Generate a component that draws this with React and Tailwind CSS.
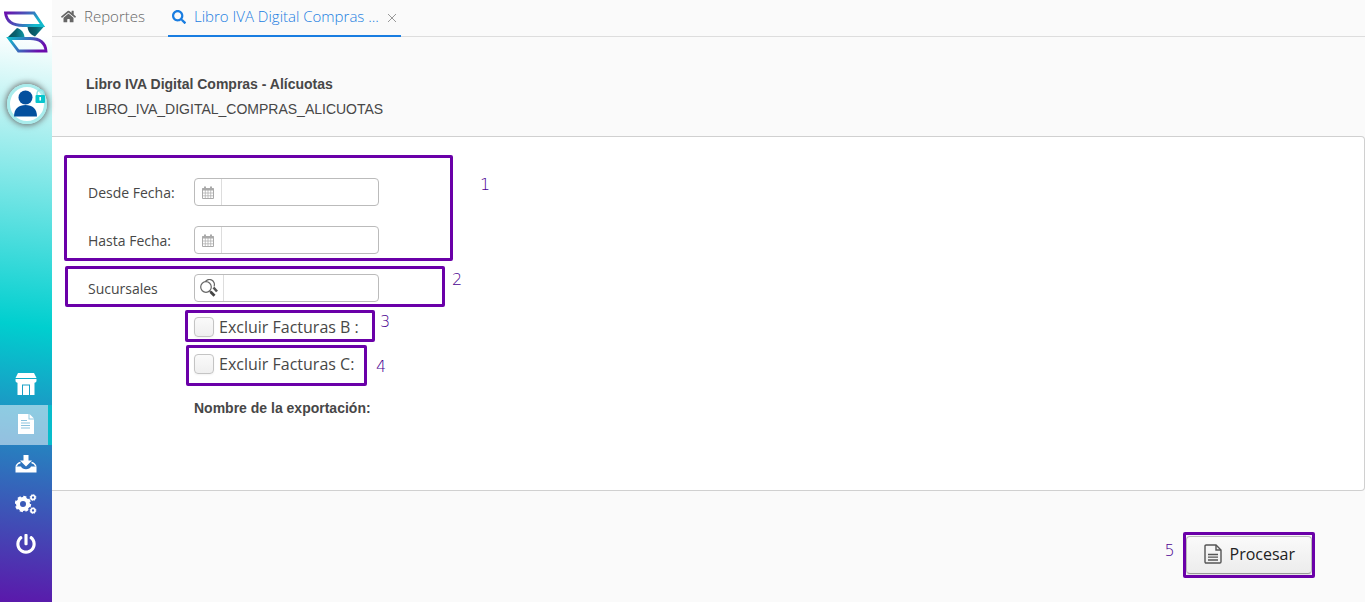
import React from "react";
import { FaHome, FaSearch, FaPowerOff } from "react-icons/fa";

function Logo() {
  return (
    <svg viewBox="0 0 44 42" className="w-11 h-[42px]" fill="none">
      <defs>
        <linearGradient id="logoTop" x1="0" y1="0" x2="1" y2="0.3">
          <stop offset="0" stopColor="#6a0dad" />
          <stop offset="0.5" stopColor="#4a55b8" />
          <stop offset="1" stopColor="#12b9cc" />
        </linearGradient>
        <linearGradient id="logoBottom" x1="0" y1="0" x2="1" y2="0.3">
          <stop offset="0" stopColor="#12b9cc" />
          <stop offset="0.5" stopColor="#3a6cbc" />
          <stop offset="1" stopColor="#6a0dad" />
        </linearGradient>
        <linearGradient id="logoFold" x1="0" y1="0" x2="1" y2="0">
          <stop offset="0" stopColor="#0b4d5c" />
          <stop offset="0.5" stopColor="#08616f" />
          <stop offset="1" stopColor="#0f97a5" />
        </linearGradient>
      </defs>
      <path d="M23.500 15H40.500L31 25.500c-4-1.500-7.500-5-7.500-10.500z" fill="url(#logoFold)" />
      <path d="M20.500 27H3L13 17c4 1 7.500 4.500 7.500 10z" fill="url(#logoFold)" />
      <path
        d="M1.500 2h28.500l8.500 12.500H19C8 14.500 2.500 10 1.500 2z"
        stroke="url(#logoTop)"
        strokeWidth="2.800"
      />
      <path
        d="M42 40H14.500L5 27.500h21C36 27.500 41.300 32 42 40z"
        stroke="url(#logoBottom)"
        strokeWidth="2.800"
      />
    </svg>
  );
}

function Avatar() {
  return (
    <svg viewBox="0 0 40 40" className="size-10" fill="none">
      <circle cx="20" cy="20" r="18.500" fill="#fff" stroke="#a9ecec" strokeWidth="3" />
      <circle cx="18.500" cy="13.500" r="7" fill="#04509e" />
      <path d="M7 32.500c0-8 5-11.500 11.500-11.500S30 24.500 30 32.500z" fill="#04509e" />
      <path d="M30 12v-2.500a3.500 3.500 0 0 1 7 0V12" stroke="#8fe3e6" strokeWidth="1.500" />
      <rect x="28.500" y="11" width="9.500" height="8" rx="1" fill="#08c5cd" />
      <path d="M33.200 13v3.500" stroke="#fff" strokeWidth="1.600" />
    </svg>
  );
}

function StoreIcon() {
  return (
    <svg viewBox="0 0 22 24" className="w-[22px] h-6">
      <path d="M3 1h16l2.500 5h-21z" fill="#fff" />
      <path
        d="M.5 7h21v1.500a2 2 0 0 1-4 .5 2.200 2.200 0 0 1-4.300 0 2.200 2.200 0 0 1-4.400 0 2.200 2.200 0 0 1-4.300 0 2 2 0 0 1-4-.5z"
        fill="#fff"
      />
      <path d="M2.500 9h17v14h-17z" fill="#fff" />
      <path d="M7.500 13v10M14.500 13v10M7 13h8" stroke="#19a0c6" strokeWidth="1" fill="none" />
    </svg>
  );
}

function FileIcon() {
  return (
    <svg viewBox="0 0 16 20" className="w-4 h-5">
      <path d="M0 0h10.500v5.500H16V20H0z" fill="#fff" />
      <path d="M11.500 0 16 4.500h-4.500z" fill="#fff" />
      <path d="M3 6.500h6M3 9h9M3 11.500h9M3 14h9" stroke="#8cc3de" strokeWidth="1.200" />
    </svg>
  );
}

function InboxIcon() {
  return (
    <svg viewBox="0 0 22 18" className="w-[22px] h-[18px]" fill="#fff">
      <path d="M8.500 0h5v5.500H17l-6 6-6-6h3.500z" />
      <path d="M.5 11.500h5.500c.8 2 2.500 2.700 5 2.700s4.200-.7 5-2.700h5.500v6H.5z" />
      <path d="M1 11.500Q2.500 8 5.500 7.500M21 11.500q-1.500-3.500-4.500-4" fill="none" stroke="#fff" strokeWidth="1.300" />
    </svg>
  );
}

function GearsIcon() {
  return (
    <svg viewBox="0 0 22 20" className="w-[22px] h-5" fill="none" stroke="#fff">
      <circle cx="8" cy="10" r="5" strokeWidth="4" />
      <circle cx="8" cy="10" r="7.200" strokeWidth="2" strokeDasharray="3.200 2.455" />
      <circle cx="18" cy="3.500" r="2" strokeWidth="1.700" />
      <circle cx="18" cy="3.500" r="2.900" strokeWidth="1" strokeDasharray="1.300 0.978" />
      <circle cx="18" cy="16.500" r="2" strokeWidth="1.700" />
      <circle cx="18" cy="16.500" r="2.900" strokeWidth="1" strokeDasharray="1.300 0.978" />
    </svg>
  );
}

function CalendarIcon() {
  return (
    <svg viewBox="0 0 12 13" className="w-3 h-[13px]" fill="none" stroke="#aaa">
      <path d="M.5 2.500h11v10H.500z" />
      <path d="M0 3.500h12" strokeWidth="2" />
      <path d="M3 .5v3M9 .5v3" strokeWidth="2" />
      <path d="M.5 7h11M.5 9.800h11M3.300 4v8.500M6 4v8.500M8.700 4v8.500" strokeWidth="0.700" />
    </svg>
  );
}

function LookupIcon() {
  return (
    <svg viewBox="0 0 18 18" className="size-[18px]" fill="none" stroke="#666">
      <path d="M4.800 3.500A5 5 0 1 1 14 7.500" strokeWidth="1.200" />
      <path d="m13.500 8.500 3.500 4" stroke="#555" strokeWidth="2.600" />
      <circle cx="6" cy="8" r="5.300" fill="#fff" strokeWidth="1.200" />
      <path d="m9.500 11.700 1.500 1.500" strokeWidth="1.300" />
      <path d="m10.500 12.700 4 4" stroke="#444" strokeWidth="2.800" />
    </svg>
  );
}

function DocumentIcon() {
  return (
    <svg viewBox="0 0 18 20" className="w-[18px] h-5" fill="none" stroke="#555">
      <path d="M1 2.200Q1 1 2.200 1H12l5 5v11.800q0 1.200-1.200 1.200H2.200Q1 19 1 17.800z" strokeWidth="1.400" />
      <path d="M12 1v5h5" strokeWidth="1.400" />
      <path d="M4 10.500h10M4 13.200h10M4 16h10" strokeWidth="1.300" />
    </svg>
  );
}

const menu = [
  { name: "Ventas", icon: <StoreIcon /> },
  { name: "Reportes", icon: <FileIcon />, active: true },
  { name: "Descargas", icon: <InboxIcon /> },
  { name: "Configuración", icon: <GearsIcon /> },
  { name: "Salir", icon: <FaPowerOff className="size-5 text-white" /> },
];

// Numbered call-out frame drawn over the form
function Mark({ number, box, label }) {
  return (
    <div
      className={`absolute pointer-events-none border-3 border-[#6a00a8] rounded-xs ${box}`}
    >
      <span
        className={`absolute font-['DejaVu_Sans',sans-serif] font-extralight text-base leading-4 text-[#4a0090] ${label}`}
      >
        {number}
      </span>
    </div>
  );
}

function Field({ id, label, icon, iconWidth }) {
  return (
    <div className="flex items-start h-7">
      <label htmlFor={id} className="w-[106px] pt-px text-sm leading-7">
        {label}
      </label>
      <div className="flex w-[185px] h-7 border border-[#bbb] rounded bg-white">
        <button
          type="button"
          aria-label={label}
          className={`flex items-center justify-center border-r border-[#ddd] ${iconWidth}`}
        >
          {icon}
        </button>
        <input id={id} type="text" className="flex-1 min-w-0 px-2 text-sm outline-none" />
      </div>
    </div>
  );
}

function Check({ id, label }) {
  return (
    <div className="flex items-center h-5 gap-[5px]">
      <input
        id={id}
        type="checkbox"
        className="appearance-none size-5 border border-[#c4c4c4] rounded bg-linear-to-b from-[#fafafa] to-[#efefef] shadow-xs"
      />
      <label htmlFor={id} className="text-base">
        {label}
      </label>
    </div>
  );
}

export default function App() {
  return (
    <div className="flex min-h-screen bg-[#fafafa] font-['Open_Sans',sans-serif] text-[#474747]">
      <aside className="flex flex-col w-13 shrink-0 bg-[linear-gradient(187deg,#fff_6%,#00cfcf_54%,#5b18ab_100%)]">
        <div className="pl-1 pt-[11px]">
          <Logo />
        </div>
        <button
          type="button"
          aria-label="Usuario"
          className="mt-[31px] ml-[7px] size-10 rounded-full shadow-[0_0_6px_1px_#666]"
        >
          <Avatar />
        </button>
        <nav className="mt-auto pb-[37px]">
          {menu.map((item) => (
            <a
              key={item.name}
              href="#"
              aria-label={item.name}
              className={`flex items-center justify-center h-10 pb-[2px] ${
                item.active ? "bg-white/50 bg-clip-padding border-r-4 border-[#08bccb] pl-1" : ""
              }`}
            >
              {item.icon}
            </a>
          ))}
        </nav>
      </aside>

      <main className="flex-1 min-w-0">
        <nav className="flex h-[37px] border-b border-[#ddd] text-[15px] font-light">
          <a href="#" className="flex items-center gap-2 pl-[9px] pb-[3px] text-[#666]">
            <FaHome className="size-[15px]" />
            Reportes
          </a>
          <div className="flex items-center ml-[23px] pl-1 pr-1 -mb-px border-b-2 border-[#197de1] text-[#197de1]">
            <a href="#" className="flex items-center gap-2 pb-[2px]">
              <FaSearch className="size-[14px]" />
              Libro IVA Digital Compras ...
            </a>
            <button type="button" aria-label="Cerrar" className="ml-2 text-[#999]">
              <svg viewBox="0 0 10 10" className="size-[10px]" stroke="currentColor">
                <path d="m1 1 8 8M9 1 1 9" />
              </svg>
            </button>
          </div>
        </nav>

        <header className="pt-[35px] pb-[14px] pl-[34px] font-['Liberation_Sans',sans-serif] text-sm leading-[25px]">
          <h1 className="font-bold">Libro IVA Digital Compras - Alícuotas</h1>
          <p>LIBRO_IVA_DIGITAL_COMPRAS_ALICUOTAS</p>
        </header>

        <form>
          <section className="relative pt-[41px] pb-[72px] pl-9 bg-white border border-l-0 border-[#d0d0d0] rounded-r">
            <div className="flex flex-col gap-5">
              <Field id="desde" label="Desde Fecha:" icon={<CalendarIcon />} iconWidth="w-[27px]" />
              <Field id="hasta" label="Hasta Fecha:" icon={<CalendarIcon />} iconWidth="w-[27px]" />
              <Field id="sucursales" label="Sucursales" icon={<LookupIcon />} iconWidth="w-[29px]" />
            </div>
            <div className="flex flex-col gap-[17px] mt-[15px] ml-[106px]">
              <Check id="facturasB" label="Excluir Facturas B :" />
              <Check id="facturasC" label="Excluir Facturas C:" />
            </div>
            <p className="mt-6 ml-[106px] font-['Liberation_Sans',sans-serif] text-sm font-bold">
              Nombre de la exportación:
            </p>

            <Mark number="1" box="left-3 top-[18px] w-[389px] h-[106px]" label="left-[413px] top-[19px]" />
            <Mark number="2" box="left-[13px] top-[129px] w-[380px] h-[41px]" label="left-[384px] top-[3px]" />
            <Mark number="3" box="left-[133px] top-[173px] w-[190px] h-8" label="left-[192px] top-px" />
            <Mark number="4" box="left-[134px] top-[208px] w-[181px] h-[41px]" label="left-[187px] top-[11px]" />
          </section>

          <div className="flex justify-end pt-[45px] pr-[53px]">
            <div className="relative">
              <button
                type="submit"
                className="flex items-center gap-2 h-[38px] pl-[17px] pr-4 pb-[2px] border border-[#bbb] border-b-[#999] rounded bg-linear-to-b from-[#fafafa] to-[#ececec] text-base text-[#222] shadow-sm"
              >
                <DocumentIcon />
                Procesar
              </button>
              <Mark number="5" box="-inset-x-[3px] -inset-y-1" label="-left-[21px] top-2" />
            </div>
          </div>
        </form>
      </main>
    </div>
  );
}
